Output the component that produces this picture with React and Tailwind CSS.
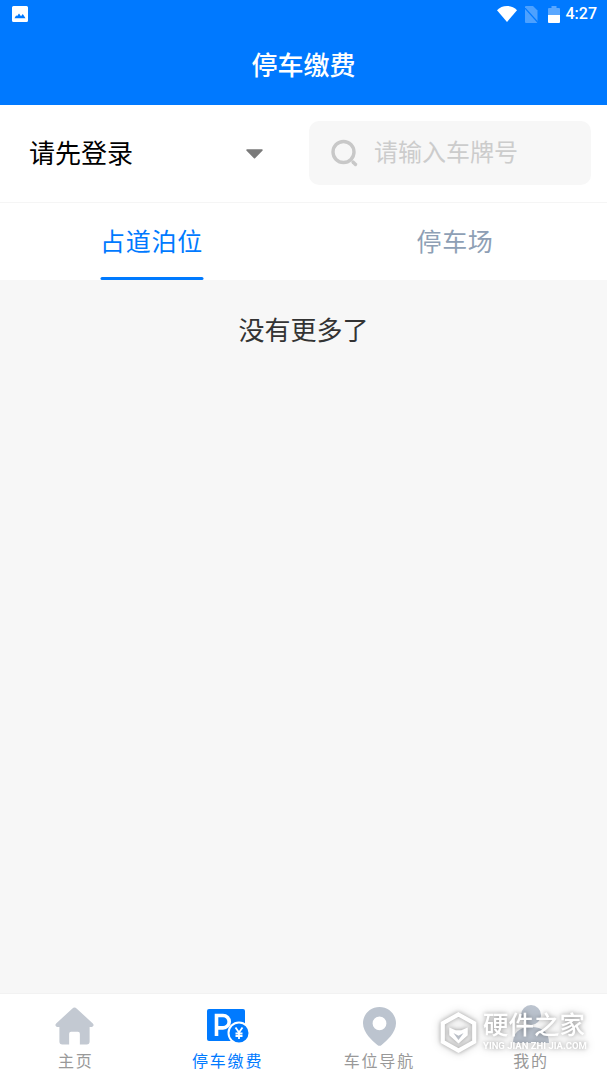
const cjk = "font-['Roboto','Noto_Sans_CJK_SC',sans-serif]";

function Tab({ icon, label, active }) {
  return (
    <div className="flex-1 flex flex-col items-center">
      <div className="h-[40px] mt-[12px] flex items-center justify-center">{icon}</div>
      <div className={`mt-[6px] text-[16px] leading-[20px] tracking-[1.8px] ${active ? "text-[#007aff]" : "text-[#999999]"}`}>{label}</div>
    </div>
  );
}

export default function App() {
  return (
    <div className={`relative w-[607px] h-[1080px] flex flex-col bg-[#f7f7f7] overflow-hidden ${cjk}`}>
      <header className="h-[105px] bg-[#0079ff] flex flex-col shrink-0">
        <div className="h-[28px] flex items-center justify-between pl-[12px] pr-[10px]">
          <svg width="16" height="16" viewBox="0 0 16 16"><path fillRule="evenodd" fill="#fff" d="M1.5 0h13A1.5 1.5 0 0 1 16 1.500v13a1.500 1.500 0 0 1-1.500 1.500h-13A1.500 1.500 0 0 1 0 14.500v-13A1.500 1.500 0 0 1 1.500 0Zm1 12.200h11L10.800 8 9 10.200 7 7.500 5 10.200 4.200 9.300Z"/></svg>
          <div className="flex items-center">
            <svg width="20" height="16" viewBox="0 0 20 16"><path fill="#fff" d="M0 4.200C2.600 1.600 6 0 10 0s7.400 1.600 10 4.200L10 16Z"/></svg>
            <svg className="ml-[8px]" width="13" height="17" viewBox="0 0 13 17"><path fill="#fff" fillOpacity=".3" d="M1 0h7l4.500 4.500V16a1 1 0 0 1-1 1H1a1 1 0 0 1-1-1V1a1 1 0 0 1 1-1Z"/><path stroke="#0079ff" strokeWidth="1.200" d="M-1 1 13 16.500"/></svg>
            <svg className="ml-[10px]" width="12" height="17" viewBox="0 0 12 17"><path fill="#fff" fillOpacity=".35" d="M3.500 0h5v2H11a1 1 0 0 1 1 1v6H0V3a1 1 0 0 1 1-1h2.500Z"/><path fill="#fff" d="M0 9h12v7a1 1 0 0 1-1 1H1a1 1 0 0 1-1-1Z"/></svg>
            <span className="ml-[6px] text-white text-[16px] leading-[20px] font-medium font-['Roboto',sans-serif]">4:27</span>
          </div>
        </div>
        <div className="text-center text-white text-[26px] leading-[36px] font-medium mt-[20px]">停车缴费</div>
      </header>

      <section className="h-[98px] bg-white border-b border-[#f5f5f5] shrink-0 flex items-center">
        <div className="w-[309px] flex items-center pl-[29px]">
          <span className="text-black text-[26px] leading-[36px] mt-[1px]">请先登录</span>
          <svg className="ml-[113px]" width="17" height="10" viewBox="0 0 18 10"><path fill="#7a7a7a" d="M1 0h16a.8.8 0 0 1 .6 1.300L9.600 9.400a.8.8 0 0 1-1.200 0L.4 1.300A.8.8 0 0 1 1 0Z" /></svg>
        </div>
        <div className="w-[282px] h-[64px] mb-[1px] rounded-[10px] bg-[#f7f7f7] flex items-center pl-[21px]">
          <svg width="28" height="28" viewBox="0 0 28 28" fill="none" stroke="#c8c8c8" strokeWidth="3.400" strokeLinecap="round"><circle cx="13.500" cy="13" r="10.500"/><path d="M23 23l2.500 2.500"/></svg>
          <span className="ml-[16px] text-[24px] leading-[34px] text-[#cccccc]">请输入车牌号</span>
        </div>
      </section>

      <nav className="h-[77px] bg-white flex shrink-0">
        <div className="w-[303px] flex justify-center">
          <div className="relative h-full flex items-center pt-[2px]">
            <span className="text-[#007aff] text-[25px] leading-[36px] tracking-[0.7px]">占道泊位</span>
            <div className="absolute left-1/2 -translate-x-1/2 w-[103px] bottom-0 h-[3px] rounded-full bg-[#007aff]"></div>
          </div>
        </div>
        <div className="flex-1 flex justify-center items-center pt-[2px]">
          <span className="text-[#8e9fb5] text-[25px] leading-[36px] tracking-[0.7px]">停车场</span>
        </div>
      </nav>

      <main className="flex-1">
        <p className="text-center text-[#333333] text-[26px] leading-[36px] mt-[33px]">没有更多了</p>
      </main>

      <footer className="h-[87px] bg-white flex shrink-0 border-t border-[#f2f2f2]">
        <Tab label="主页" icon={
          <svg className="mr-[2px]" width="39" height="39" viewBox="0 0 40 39"><path fill="#c3c9d2" d="M17.600 1.200a3.400 3.400 0 0 1 4.800 0L38.800 16.400c1.500 1.400.6 3.600-1.300 3.600H35.500v15a3 3 0 0 1-3 3H25.500V27a2 2 0 0 0-2-2h-7a2 2 0 0 0-2 2v11H7.500a3 3 0 0 1-3-3V20H2.500C.6 20-.3 17.800 1.200 16.400Z"/></svg>
        } />
        <Tab active label="停车缴费" icon={
          <svg width="42" height="34" viewBox="0 0 42 34">
            <rect x="0" y="0" width="38" height="32" rx="2" fill="#007aff"/>
            <path fill="none" stroke="#fff" strokeWidth="3.600" d="M9.500 27V6.500h6.500a6.200 6.200 0 0 1 0 12.400H9.500"/>
            <circle cx="32" cy="24" r="10.500" fill="#007aff" stroke="#fff" strokeWidth="2"/>
            <path fill="none" stroke="#fff" strokeWidth="1.800" d="M28.500 18.500 32 23.500l3.500-5M32 23.500V30M28.500 24.500h7M28.500 27h7"/>
          </svg>
        } />
        <Tab label="车位导航" icon={
          <svg width="33" height="39" viewBox="0 0 33 39"><path fillRule="evenodd" fill="#bcc4cf" d="M16.500 0C25.600 0 33 7.200 33 16.200 33 25.500 23.500 34 18.600 38a3.300 3.300 0 0 1-4.200 0C9.500 34 0 25.500 0 16.200 0 7.200 7.400 0 16.500 0Zm0 9.500a6.900 6.900 0 1 0 0 13.800 6.900 6.900 0 0 0 0-13.800Z"/></svg>
        } />
        <Tab label="我的" icon={
          <svg className="mb-[4px]" width="36" height="39" viewBox="0 0 36 39"><circle cx="18" cy="10" r="10" fill="#bcc4cf"/><path fill="#bcc4cf" d="M0 38c0-10 6-16 18-16s18 6 18 16Z"/></svg>
        } />
      </footer>

      <div className="absolute left-[440px] top-[1011px] w-[150px] h-[46px] flex items-start [filter:drop-shadow(0_0_2px_rgba(0,0,0,0.3))_drop-shadow(0_0_4px_rgba(0,0,0,0.2))]">
        <svg width="37" height="43" viewBox="0 0 40 44">
          <path fill="none" stroke="#fff" strokeWidth="4.500" d="M20 2.500 37 12v20L20 41.500 3 32V12Z"/>
          <path fill="#fff" d="M10 16.500 17 19.500h6L30 16.500V25L20 34 10 25Z"/>
          <path fill="#b9bec6" d="M14.500 22.500 20 25.500 25.500 22.500 20 30Z"/>
        </svg>
        <div className="ml-[6px] flex flex-col">
          <span className="text-white text-[25.500px] leading-[28px] font-medium">硬件之家</span>
          <span className="mt-[1px] text-white text-[9.500px] leading-[11px] font-bold whitespace-nowrap font-['Roboto',sans-serif]">YING JIAN ZHI JIA.COM</span>
        </div>
      </div>
    </div>
  );
}
